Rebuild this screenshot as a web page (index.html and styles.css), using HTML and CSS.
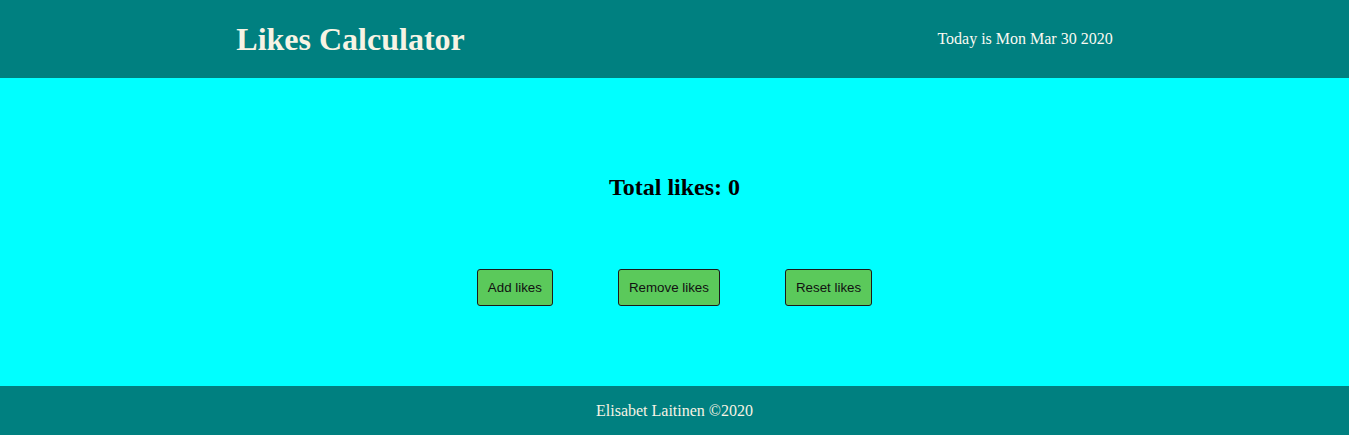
FILE: index.html
```html
<!DOCTYPE html>
<html lang="en">
<head>
<meta charset="utf-8">
<title>Likes Calculator</title>
<link rel="stylesheet" href="styles.css">
</head>
<body>
<header class="top">
  <h1 class="title">Likes Calculator</h1>
  <p class="date">Today is Mon Mar 30 2020</p>
</header>
<main class="main">
  <h2 class="total">Total likes: 0</h2>
  <div class="actions">
    <button class="btn" type="button">Add likes</button>
    <button class="btn" type="button">Remove likes</button>
    <button class="btn" type="button">Reset likes</button>
  </div>
</main>
<footer class="bottom">
  <p class="credit">Elisabet Laitinen ©2020</p>
</footer>
</body>
</html>
```

FILE: styles.css
```css
* { box-sizing: border-box; }
html, body { margin: 0; padding: 0; }
body {
  font-family: "Liberation Serif", "Times New Roman", serif;
  background: #00ffff;
  color: #000;
}
.top {
  background: #008080;
  height: 78px;
  display: flex;
  justify-content: space-around;
  align-items: center;
  color: #f7f3e4;
}
.title {
  margin: 0;
  font-size: 32px;
  font-weight: bold;
}
.date {
  margin: 0;
  font-size: 16px;
  color: #fbfaf2;
}
.main {
  height: 308px;
  display: flex;
  flex-direction: column;
  align-items: center;
  padding-top: 96px;
}
.total {
  margin: 0;
  font-size: 24px;
  font-weight: bold;
}
.actions {
  margin-top: 68px;
  display: flex;
  gap: 65px;
}
.btn {
  font-family: "Liberation Sans", Arial, sans-serif;
  font-size: 13.333px;
  padding: 10px;
  border: 1px solid #1a1a1a;
  border-radius: 3px;
  background: #5bc95b;
  color: #111;
}
.bottom {
  background: #008080;
  height: 49px;
  display: flex;
  justify-content: center;
  align-items: center;
  color: #f7f3e4;
}
.credit {
  margin: 0;
  font-size: 16px;
}
```
